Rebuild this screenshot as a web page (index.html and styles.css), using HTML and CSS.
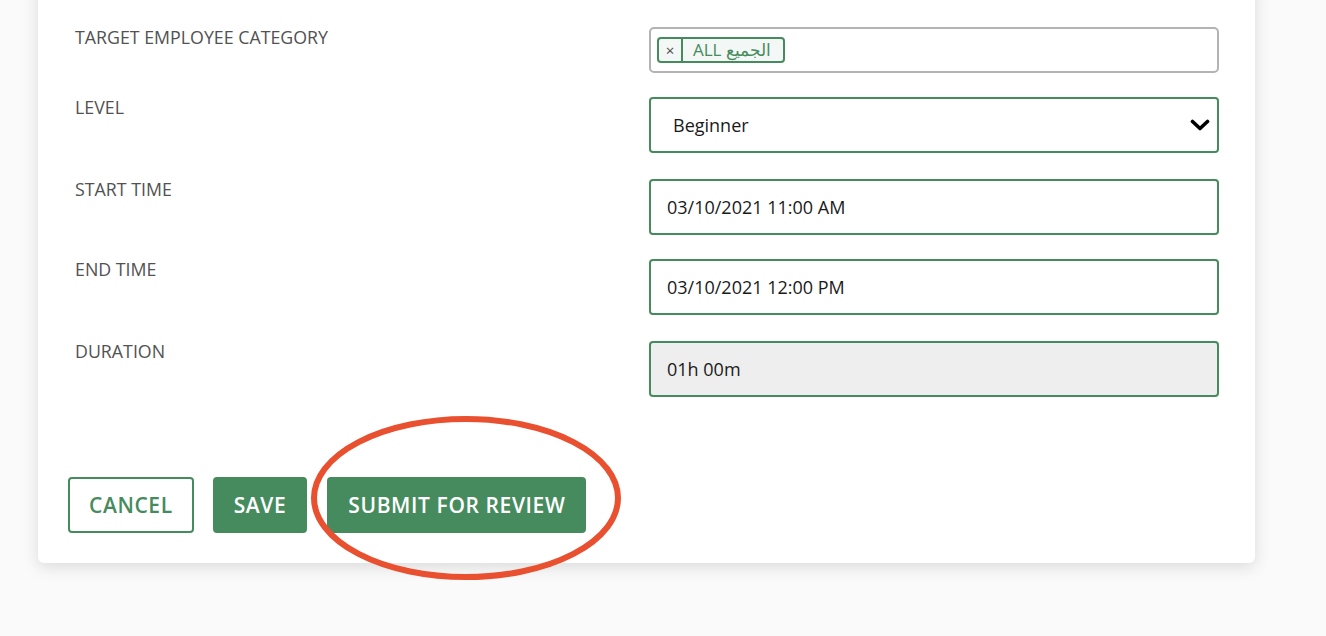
FILE: index.html
```html
<!DOCTYPE html>
<html lang="en">
<head>
<meta charset="utf-8">
<title>Course form</title>
<link rel="stylesheet" href="styles.css">
</head>
<body>
<div class="page">
  <div class="card">
    <div class="row row-a">
      <div class="label">TARGET EMPLOYEE CATEGORY</div>
      <div class="tags-field">
        <span class="tag"><span class="tag-x">×</span><span class="tag-text">ALL الجميع</span></span>
      </div>
    </div>
    <div class="row row-b">
      <div class="label">LEVEL</div>
      <div class="field select-field">
        <span class="select-value">Beginner</span>
        <svg class="chevron" width="20" height="14" viewBox="0 0 20 14"><path d="M2.5 3.5 L10 10.5 L17.5 3.5" fill="none" stroke="#000" stroke-width="3.6" stroke-linecap="round" stroke-linejoin="round"/></svg>
      </div>
    </div>
    <div class="row row-a">
      <div class="label">START TIME</div>
      <div class="field">03/10/2021 11:00 AM</div>
    </div>
    <div class="row row-b">
      <div class="label">END TIME</div>
      <div class="field">03/10/2021 12:00 PM</div>
    </div>
    <div class="row row-last">
      <div class="label">DURATION</div>
      <div class="field field-disabled">01h 00m</div>
    </div>
    <div class="actions">
      <button class="btn btn-outline">CANCEL</button>
      <button class="btn btn-solid">SAVE</button>
      <button class="btn btn-solid">SUBMIT FOR REVIEW</button>
      <svg class="highlight" width="316" height="170" viewBox="0 0 316 170"><ellipse cx="158" cy="83" rx="152" ry="79" fill="none" stroke="#e8502f" stroke-width="6"/></svg>
    </div>
  </div>
</div>
</body>
</html>
```
FILE: styles.css
```css
* { box-sizing: border-box; }
html, body {
  margin: 0;
  padding: 0;
  background: #fafafa;
  font-family: "Open Sans", "Noto Sans", sans-serif;
  overflow: hidden;
}
.page {
  padding-left: 38px;
  width: 1326px;
  height: 636px;
}
.card {
  width: 1217px;
  margin-top: -20px;
  padding: 47px 36px 30px 37px;
  background: #fff;
  border-radius: 6px;
  box-shadow: 0 4px 16px rgba(0, 0, 0, 0.13);
}
.row {
  display: flex;
  align-items: flex-start;
}
.row-a { margin-bottom: 24px; }
.row-b { margin-bottom: 26px; }
.row-last { margin-bottom: 80px; }
.label {
  width: 574px;
  flex: none;
  font-size: 17.8px;
  line-height: 20px;
  color: #525252;
}
.tags-field {
  width: 571px;
  height: 46px;
  border: 2px solid #b3b3b3;
  border-radius: 5px;
  padding: 8px 6px;
  display: flex;
  align-items: center;
}
.tag {
  display: inline-flex;
  align-items: stretch;
  height: 26px;
  border: 2px solid #468b5d;
  border-radius: 4px;
  background: #f3f7f5;
  color: #468b5d;
  font-size: 17px;
  line-height: 22px;
}
.tag-x {
  width: 24px;
  text-align: center;
  border-right: 2px solid #468b5d;
  font-size: 15px;
  color: #4a4a4a;
}
.tag-text {
  padding: 0 12px 0 10px;
}
.field {
  width: 571px;
  height: 56px;
  border: 2px solid #468b5d;
  border-radius: 4px;
  padding: 0 16px;
  display: flex;
  align-items: center;
  font-size: 18px;
  color: #1a1a1a;
}
.select-field {
  justify-content: space-between;
  padding: 0 7px 0 22px;
}
.chevron { display: block; }
.field-disabled { background: #eeeeee; }
.actions {
  position: relative;
  display: flex;
  gap: 19px;
  margin-left: -7px;
}
.btn {
  height: 56px;
  padding: 0 19px;
  border-radius: 4px;
  font-family: "Open Sans", "Noto Sans", sans-serif;
  font-size: 21px;
  font-weight: 600;
  letter-spacing: 0.6px;
  cursor: pointer;
}
.btn-outline {
  background: #fff;
  color: #468b5d;
  border: 2px solid #468b5d;
}
.btn-solid {
  background: #468b5d;
  color: #fff;
  border: 2px solid #468b5d;
}
.btn-solid + .btn-solid { margin-left: 1px; }
.highlight {
  position: absolute;
  left: 240px;
  top: -62px;
}
```
